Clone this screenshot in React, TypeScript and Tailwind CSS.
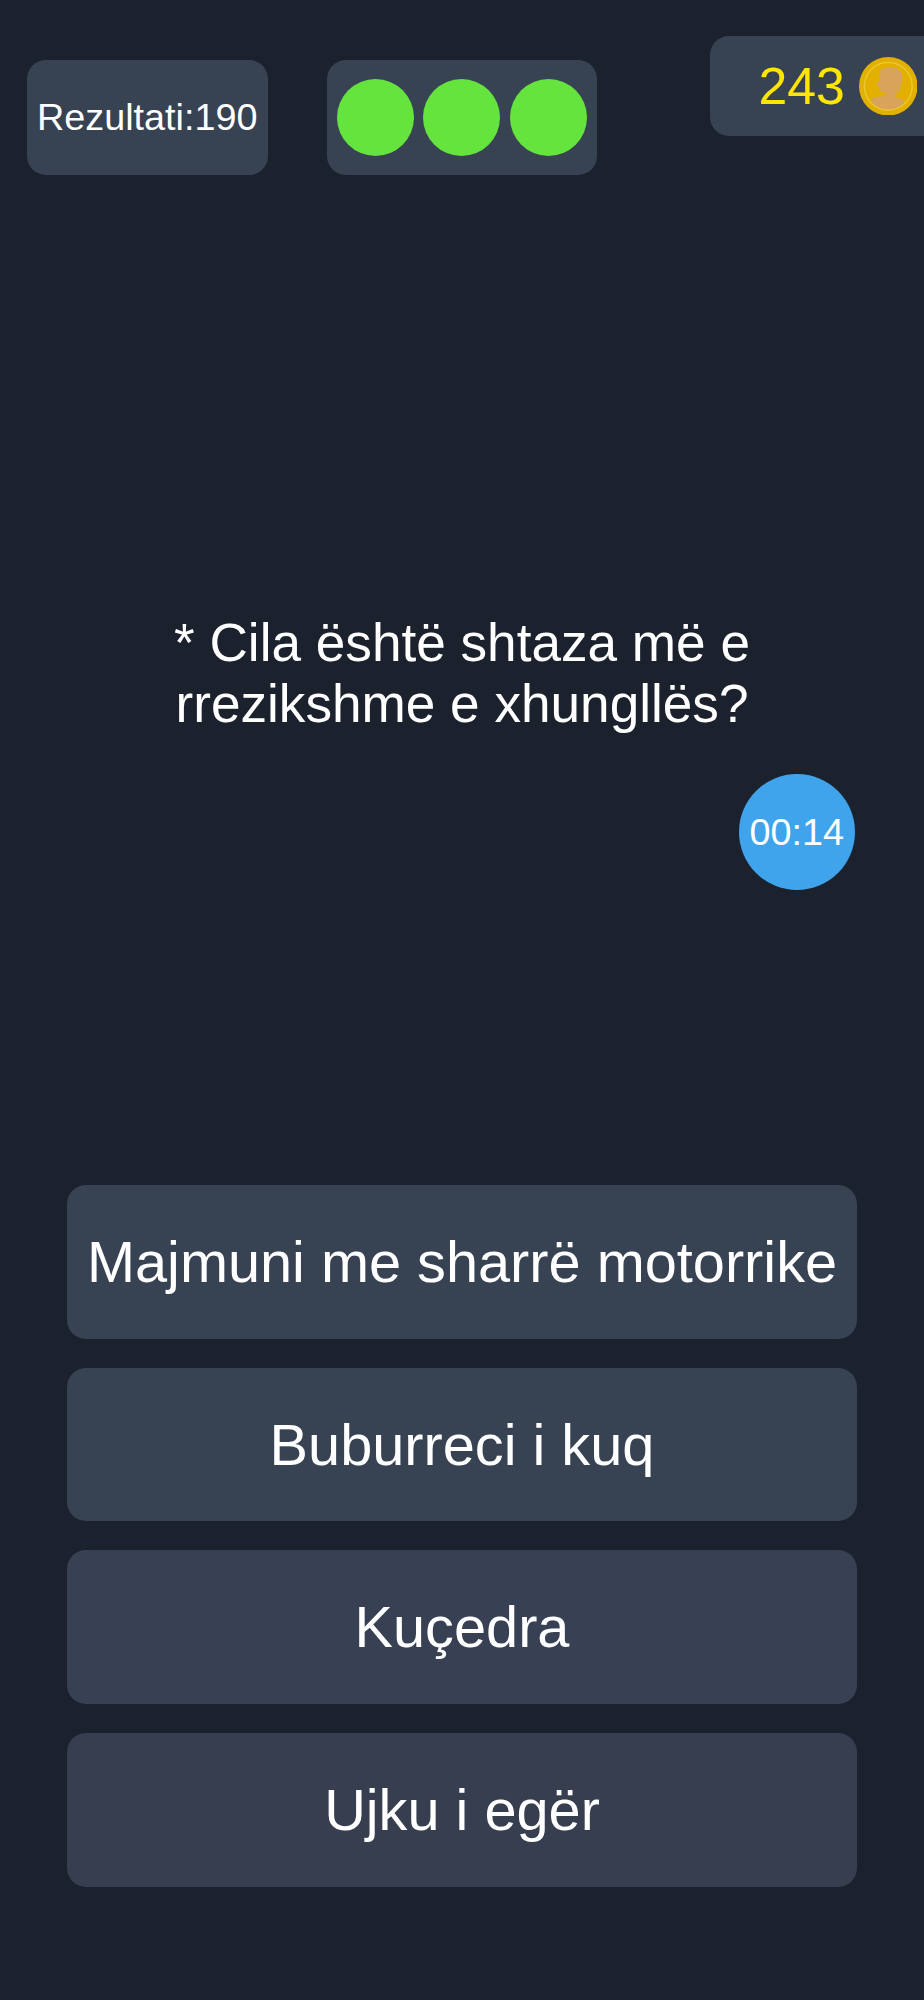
const question = '* Cila është shtaza më e rrezikshme e xhungllës?';

const answers = [
  { text: 'Majmuni me sharrë motorrike', color: 'bg-[#374253]' },
  { text: 'Buburreci i kuq', color: 'bg-[#374253]' },
  { text: 'Kuçedra', color: 'bg-[#374153]' },
  { text: 'Ujku i egër', color: 'bg-[#363e50]' },
];

function Coin() {
  return (
    <svg viewBox="0 0 174 174" className="w-[58.5px] h-[58.5px] shrink-0">
      <circle cx="87" cy="87" r="87" fill="#e3b000" />
      <path
        d="M60 49 C62 36 76 30 94 30 C116 30 129 42 129 60 C129 74 125 80 125 90 C122 99 113 107 108 112 L108 119 C117 123 127 123 134 128 L134 135 C120 152 104 159 87 159 C69 159 52 151 39 135 C34 128 40 121 49 119 L70 117 C76 116 79 114 79 109 C78 103 72 105 66 104 C61 102 61 97 61 91 C60 86 52 84 52 80 C53 76 60 73 61 68 C62 62 58 56 60 49 Z"
        fill="#d8a35a"
      />
      <circle cx="87" cy="87" r="71" fill="none" stroke="#ebca32" strokeWidth="4" />
    </svg>
  );
}

function Lives({ count }: { count: number }) {
  return (
    <div className="ml-[59.5px] mt-[24px] flex h-[115.5px] w-[269.5px] items-center justify-between rounded-[19px] bg-[#374253] px-[10px]">
      {Array.from({ length: count }, (_, i) => (
        <div key={i} className="size-[77px] rounded-full bg-[#65e43d]" />
      ))}
    </div>
  );
}

export default function App() {
  return (
    <div className="flex h-[2000px] w-[924px] flex-col overflow-hidden bg-[#1c222d] font-['Liberation_Sans',Arial,sans-serif] text-white">
      {/* Status bar */}
      <header className="flex h-[175px] items-start pl-[27px] pt-[35.5px]">
        <div className="mt-[24px] flex h-[115.5px] w-[240.5px] shrink-0 items-center justify-center rounded-[19px] bg-[#374253] pt-[1.5px] text-[37.8px] leading-none whitespace-nowrap">
          Rezultati:190
        </div>
        <Lives count={3} />
        <div className="ml-[113px] flex h-[100.5px] flex-1 items-center gap-[14px] rounded-l-[19px] bg-[#374253] pl-[49px] text-[51.8px] leading-none text-[#ffe600]">
          <span className="pt-[2px]">243</span>
          <Coin />
        </div>
      </header>

      {/* Question */}
      <main className="mt-[437px] flex flex-col">
        <h1 className="mx-auto w-[620px] text-center text-[53.15px] leading-[61px]">{question}</h1>
        <div className="mr-[69.5px] mt-[40px] flex size-[115.5px] items-center justify-center self-end rounded-full bg-[#3fa4ec] pt-[2px] text-[37.8px] leading-none">
          00:14
        </div>
      </main>

      {/* Answers */}
      <div className="mx-[67px] mt-[295.5px] flex flex-col gap-[29px]">
        {answers.map((answer) => (
          <button
            key={answer.text}
            className={`h-[153.7px] w-full rounded-[19px] pt-[2px] text-[57.7px] leading-none whitespace-nowrap ${answer.color}`}
          >
            {answer.text}
          </button>
        ))}
      </div>
    </div>
  );
}
